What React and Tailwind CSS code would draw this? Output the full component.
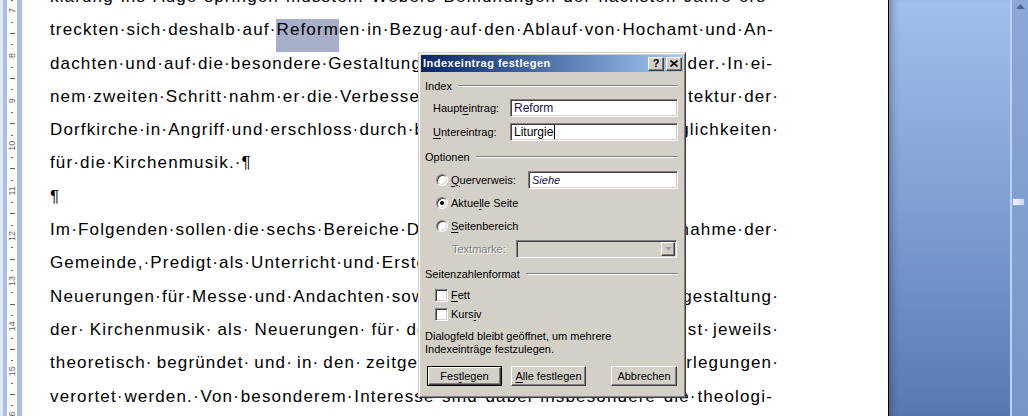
import React from "react";

const DOC_LINES = [
  { full: "klarung·ins·Auge·springen·mussten.·Webers·Bemühungen·der·nächsten·Jahre·ers-" },
  { full: "treckten·sich·deshalb·auf·Reformen·in·Bezug·auf·den·Ablauf·von·Hochamt·und·An-", hl: true },
  { left: "dachten·und·auf·die·besondere·Gestaltung", mid: "·der·Gottesdienste·im·Kirchenjahr·miteina", right: "nder.·In·ei-" },
  { left: "nem·zweiten·Schritt·nahm·er·die·Verbesserung", mid: "·der·Ausstattung·und·der·Arch", right: "itektur·der·" },
  { left: "Dorfkirche·in·Angriff·und·erschloss·durch·bauliche", mid: "·Maßnahmen·neue·Mö", right: "glichkeiten·" },
  { plain: "für·die·Kirchenmusik.·¶" },
  { plain: "¶" },
  { left: "Im·Folgenden·sollen·die·sechs·Bereiche·Der", mid: "·Gottesdienstreform,·nämlich·Teil", right: "nahme·der·" },
  { left: "Gemeinde,·Predigt·als·Unterricht·und·Erste·Beichte·sowie·Katechese,", mid: "" },
  { left: "Neuerungen·für·Messe·und·Andachten·sowie", mid: "·Kirchenbau·und·Raum", right: "gestaltung·" },
  { left: "der·Kirchenmusik·als·Neuerungen·für·den", mid: "·Gottesdie", right: "nst·jeweils·", wide: "gap-[5px]", rwide: "gap-[3px]" },
  { left: "theoretisch·begründet·und·in·den·zeitgenössischen", mid: "·liturgischen·Übe", right: "rlegungen·", wide: "gap-[4px]" },
  { full: "verortet·werden.·Von·besonderem·Interesse·sind·dabei·insbesondere·die·theologi-" },
];

const tokens = (t) => t.match(/[^·]+·?|·/g) || [];

function Token({ t, hl }) {
  if (hl && t.startsWith("Reformen")) {
    return (
      <span className="relative">
        <span className="absolute left-0 top-[6px] h-[33px] w-[63px] bg-[#A7AFCA]" />
        <span className="relative">Reform</span>
        <span>en·</span>
      </span>
    );
  }
  return <span className="whitespace-pre">{t}</span>;
}

function DocLine({ line }) {
  if (line.full) {
    return (
      <div className="flex h-[33.3px] justify-between">
        {tokens(line.full).map((t, i) => (
          <Token key={i} t={t} hl={line.hl} />
        ))}
      </div>
    );
  }
  if (line.plain) {
    return (
      <div className="flex h-[33.3px]">
        <span className="whitespace-pre">{line.plain}</span>
      </div>
    );
  }
  const gap = line.wide || "gap-0";
  const rgap = line.rwide || gap;
  const trailing = line.right && line.right.endsWith("·");
  return (
    <div className="flex h-[33.3px]">
      <span className={`flex shrink-0 ${gap}`}>
        {tokens(line.left).map((t, i) => (
          <Token key={i} t={t} />
        ))}
      </span>
      <span className="min-w-0 flex-1 overflow-hidden whitespace-nowrap">{line.mid}</span>
      {line.right && (
        <span className={`flex shrink-0 ${rgap} ${trailing ? "mr-[-6px]" : ""}`}>
          {tokens(line.right).map((t, i) => (
            <Token key={i} t={t} />
          ))}
        </span>
      )}
    </div>
  );
}

function Ruler() {
  const nums = [7, 8, 9, 10, 11, 12, 13, 14, 15, 16];
  return (
    <div className="w-[22px] shrink-0">
      <svg width="22" height="416" viewBox="0 0 22 416">
        <rect x="0" y="0" width="3" height="416" fill="#E3EAF6" />
        <rect x="3" y="0" width="4" height="416" fill="#A7C0E8" />
        <rect x="7" y="0" width="10" height="416" fill="#FFFFFF" />
        <rect x="17" y="0" width="5" height="416" fill="#A7C0E8" />
        {nums.map((n) => {
          const y = 10.5 + 45.1 * (n - 7);
          return (
            <g key={n}>
              <text
                x="12"
                y={y}
                fontSize="9"
                fill="#626262"
                fontFamily="Liberation Sans, Arial, sans-serif"
                textAnchor="middle"
                dominantBaseline="central"
                transform={`rotate(-90 12 ${y})`}
              >
                {n}
              </text>
              <rect x="11" y={Math.round(y + 11.3)} width="2" height="1" fill="#626262" />
              <rect x="10" y={Math.round(y + 22.5)} width="5" height="1" fill="#626262" />
              <rect x="11" y={Math.round(y + 33.8)} width="2" height="1" fill="#626262" />
            </g>
          );
        })}
        <rect x="11" y="0" width="2" height="1" fill="#626262" />
      </svg>
    </div>
  );
}

function Page() {
  return (
    <div className="w-[866px] shrink-0 overflow-hidden bg-white">
      <div className="ml-[28px] mt-[-20px] w-[723px] font-['Liberation_Sans',Arial,sans-serif] text-[17px] leading-[33.3px] tracking-[1.15px] text-black">
        {DOC_LINES.map((l, i) => (
          <DocLine key={i} line={l} />
        ))}
      </div>
    </div>
  );
}

const SUNKEN =
  "border border-t-[#808080] border-l-[#808080] border-b-white border-r-white shadow-[inset_1px_1px_0_#404040,inset_-1px_-1px_0_#D4D0C8]";
const RAISED =
  "border border-t-white border-l-white border-r-[#404040] border-b-[#404040] shadow-[inset_-1px_-1px_0_#808080,inset_1px_1px_0_#D4D0C8] bg-[#D4D0C8]";

function U({ children }) {
  return <span className="underline underline-offset-[2px]">{children}</span>;
}

function GroupHead({ children }) {
  return (
    <div className="flex h-[14px] items-center pl-[4px] pr-[5px]">
      <span>{children}</span>
      <div className="ml-[6px] h-[2px] flex-1 border-t border-b border-t-[#808080] border-b-white" />
    </div>
  );
}

function Radio({ checked }) {
  return (
    <div className={`flex h-[12px] w-[12px] shrink-0 items-center justify-center rounded-full bg-white ${SUNKEN}`}>
      {checked && <div className="h-[4px] w-[4px] rounded-full bg-black" />}
    </div>
  );
}

function Check() {
  return <div className={`h-[13px] w-[13px] shrink-0 bg-white ${SUNKEN}`} />;
}

function TitleBtn({ children }) {
  return (
    <div className={`flex h-[14px] w-[16px] items-center justify-center ${RAISED}`}>{children}</div>
  );
}

function Button({ children, w, def }) {
  if (def) {
    return (
      <div className={`h-[20px] ${w} border border-black`}>
        <div className={`flex h-full w-full items-center justify-center ${RAISED}`}>{children}</div>
      </div>
    );
  }
  return <div className={`flex h-[20px] ${w} items-center justify-center ${RAISED}`}>{children}</div>;
}

function Dialog() {
  return (
    <div className="absolute left-[418px] top-[52px] z-10 flex h-[346px] w-[268px] flex-col border border-t-[#D4D0C8] border-l-[#D4D0C8] border-r-[#404040] border-b-[#404040] bg-[#D4D0C8] p-[2px] font-['Liberation_Sans',Arial,sans-serif] text-[11px] leading-[13px] text-black shadow-[inset_1px_1px_0_#fff,inset_-1px_-1px_0_#808080]">
      <div className="flex h-[17px] shrink-0 items-center bg-linear-to-r from-[#0A246A] to-[#A6CAF0] pl-[2px] pr-[1px]">
        <span className="flex-1 font-bold tracking-[0.5px] text-white">Indexeintrag festlegen</span>
        <TitleBtn>
          <span className="text-[11px] font-bold leading-none">?</span>
        </TitleBtn>
        <div className="ml-[2px]">
          <TitleBtn>
            <svg width="8" height="7" viewBox="0 0 8 7">
              <path d="M0.5 0.5 L7.5 6.5 M7.5 0.5 L0.5 6.5" stroke="#000" strokeWidth="1.6" />
            </svg>
          </TitleBtn>
        </div>
      </div>

      <div className="flex flex-col">
        <div className="mt-[7px]">
          <GroupHead>Index</GroupHead>
        </div>
        <div className="mt-[6px] flex h-[18px] items-center pl-[12px] pr-[5px]">
          <span className="w-[77px]">
            Haupt<U>e</U>intrag:
          </span>
          <div className={`flex h-[18px] flex-1 items-center bg-white pl-[3px] text-[12px] text-[#24124E] ${SUNKEN}`}>
            Reform
          </div>
        </div>
        <div className="mt-[6px] flex h-[18px] items-center pl-[12px] pr-[5px]">
          <span className="w-[77px]">
            <U>U</U>ntereintrag:
          </span>
          <div className={`flex h-[18px] flex-1 items-center bg-white pl-[3px] text-[12px] ${SUNKEN}`}>
            <span>Liturgie</span>
            <span className="ml-[1px] inline-block h-[14px] w-[1px] bg-black" />
          </div>
        </div>

        <div className="mt-[9px]">
          <GroupHead>Optionen</GroupHead>
        </div>
        <div className="mt-[7px] flex h-[18px] items-center pl-[15px] pr-[5px]">
          <Radio />
          <span className="ml-[3px] w-[77px]">
            <U>Q</U>uerverweis:
          </span>
          <div className={`flex h-[18px] flex-1 items-center bg-white pl-[3px] italic text-[#1A1040] ${SUNKEN}`}>
            Siehe
          </div>
        </div>
        <div className="mt-[6px] flex h-[16px] items-center pl-[15px]">
          <Radio checked />
          <span className="ml-[3px]">
            Aktue<U>l</U>le Seite
          </span>
        </div>
        <div className="mt-[7px] flex h-[16px] items-center pl-[15px]">
          <Radio />
          <span className="ml-[3px]">
            <U>S</U>eitenbereich
          </span>
        </div>
        <div className="mt-[6px] flex h-[18px] items-center pl-[31px] pr-[6px]">
          <span className="w-[64px] text-[#808080] [text-shadow:1px_1px_0_#fff]">Textmarke:</span>
          <div className={`flex h-[18px] flex-1 items-center justify-end bg-[#D4D0C8] pr-[1px] ${SUNKEN}`}>
            <div className={`flex h-[14px] w-[14px] items-center justify-center ${RAISED}`}>
              <svg width="7" height="4" viewBox="0 0 7 4">
                <path d="M0 0 H7 L3.5 4 Z" fill="#A0A0A0" />
              </svg>
            </div>
          </div>
        </div>

        <div className="mt-[9px]">
          <GroupHead>Seitenzahlenformat</GroupHead>
        </div>
        <div className="mt-[6px] flex h-[16px] items-center pl-[14px]">
          <Check />
          <span className="ml-[3px]">
            <U>F</U>ett
          </span>
        </div>
        <div className="mt-[3px] flex h-[16px] items-center pl-[14px]">
          <Check />
          <span className="ml-[3px]">
            Kurs<U>i</U>v
          </span>
        </div>

        <div className="mt-[8px] pl-[4px]">
          <div>Dialogfeld bleibt geöffnet, um mehrere</div>
          <div>Indexeinträge festzulegen.</div>
        </div>

        <div className="mt-[10px] flex items-center pl-[6px]">
          <Button w="w-[75px]" def>
            Fes<U>t</U>legen
          </Button>
          <div className="ml-[9px]">
            <Button w="w-[75px]">
              <U>A</U>lle festlegen
            </Button>
          </div>
          <div className="ml-[25px]">
            <Button w="w-[66px]">Abbrechen</Button>
          </div>
        </div>
      </div>
    </div>
  );
}

function Scrollbar() {
  return (
    <div className="flex w-[18px] shrink-0 flex-col border-l-2 border-l-[#BFD1EF] bg-linear-to-b from-[#8AA8D8] to-[#7795C5]">
      <div className="flex h-[10px] items-center justify-center pt-[2px]">
        <svg width="9" height="5" viewBox="0 0 9 5">
          <path d="M4.5 0 L9 5 H0 Z" fill="#4E6590" />
        </svg>
      </div>
      <div className="mt-[188px] h-[8px] w-[13px] border border-[#8DA6CE] bg-linear-to-r from-[#F0F5FC] to-[#C9D8F0]" />
    </div>
  );
}

export default function App() {
  return (
    <div className="relative flex h-[416px] w-[1028px] overflow-hidden bg-white">
      <Ruler />
      <Page />
      <div className="w-[1px] shrink-0 bg-black" />
      <div className="w-[121px] shrink-0 bg-linear-to-b from-[#A1BFEA] via-[#7F9FD2] to-[#5779B1]">
        <div className="h-full w-full shadow-[inset_8px_0_8px_-6px_rgba(20,40,90,0.45)]" />
      </div>
      <Scrollbar />
      <Dialog />
    </div>
  );
}
